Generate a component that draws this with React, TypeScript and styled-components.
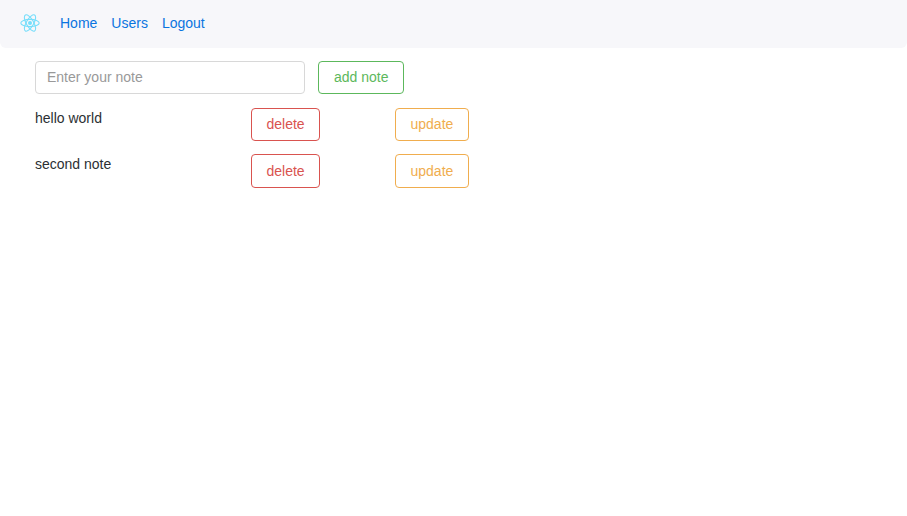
import React from "react";
import styled, { createGlobalStyle } from "styled-components";

const GlobalStyle = createGlobalStyle`
  html, body {
    margin: 0;
    padding: 0;
    background: #fff;
    color: #2b2f33;
    font-family: "Liberation Sans", Arial, sans-serif;
    font-size: 14px;
  }
`;

const Navbar = styled.nav`
  height: 48px;
  box-sizing: border-box;
  display: flex;
  align-items: center;
  padding: 0 0 2px 20px;
  background-color: #f7f7fa;
  border-radius: 0 0 6px 6px;
`;

const Logo = styled.svg`
  width: 20px;
  height: 18px;
  margin-right: 20px;
  opacity: 0.85;
`;

const NavLink = styled.a`
  color: #0a75e0;
  font-size: 14px;
  text-decoration: none;
  margin-right: 14px;
`;

const Content = styled.main`
  padding: 12.8px 0 0 35px;
`;

const AddRow = styled.form`
  display: flex;
  gap: 13px;
  margin-bottom: 13.2px;
`;

const NoteInput = styled.input`
  width: 270px;
  height: 33.6px;
  box-sizing: border-box;
  padding: 0 11px 2px;
  border: 1px solid #d8d8d8;
  border-radius: 4px;
  font-family: inherit;
  font-size: 14px;
  outline: none;

  &::placeholder {
    color: #999;
    opacity: 1;
  }
`;

const OutlineButton = styled.button<{ $color: string }>`
  height: 33.6px;
  box-sizing: border-box;
  padding: 0 14.5px;
  background: #fff;
  border: 1px solid ${(p) => p.$color};
  border-radius: 4px;
  color: ${(p) => p.$color};
  font-family: inherit;
  font-size: 14px;
`;

const AddButton = styled(OutlineButton)`
  padding: 0 14px 2px 15px;
`;

const NoteRow = styled.div`
  display: grid;
  grid-template-columns: 216px 144px auto;
  justify-content: start;
  align-items: start;
  margin-bottom: 12.8px;
`;

const NoteText = styled.p`
  margin: 0;
  line-height: 20px;
`;

const ReactLogo = () => (
  <Logo viewBox="-11.5 -10.23 23 20.46" aria-hidden="true">
    <circle r="2.3" fill="#61dafb" />
    <g stroke="#61dafb" strokeWidth="1.25" fill="none">
      <ellipse rx="10.6" ry="4.2" />
      <ellipse rx="10.6" ry="4.2" transform="rotate(60)" />
      <ellipse rx="10.6" ry="4.2" transform="rotate(120)" />
    </g>
  </Logo>
);

const notes = ["hello world", "second note"];

export default function App() {
  return (
    <>
      <GlobalStyle />
      <Navbar>
        <ReactLogo />
        <NavLink href="#">Home</NavLink>
        <NavLink href="#">Users</NavLink>
        <NavLink href="#">Logout</NavLink>
      </Navbar>
      <Content>
        <AddRow onSubmit={(e) => e.preventDefault()}>
          <NoteInput placeholder="Enter your note" />
          <AddButton $color="#5cb85c">add note</AddButton>
        </AddRow>
        {notes.map((note) => (
          <NoteRow key={note}>
            <NoteText>{note}</NoteText>
            <div>
              <OutlineButton $color="#d9534f">delete</OutlineButton>
            </div>
            <div>
              <OutlineButton $color="#f0ad4e">update</OutlineButton>
            </div>
          </NoteRow>
        ))}
      </Content>
    </>
  );
}
